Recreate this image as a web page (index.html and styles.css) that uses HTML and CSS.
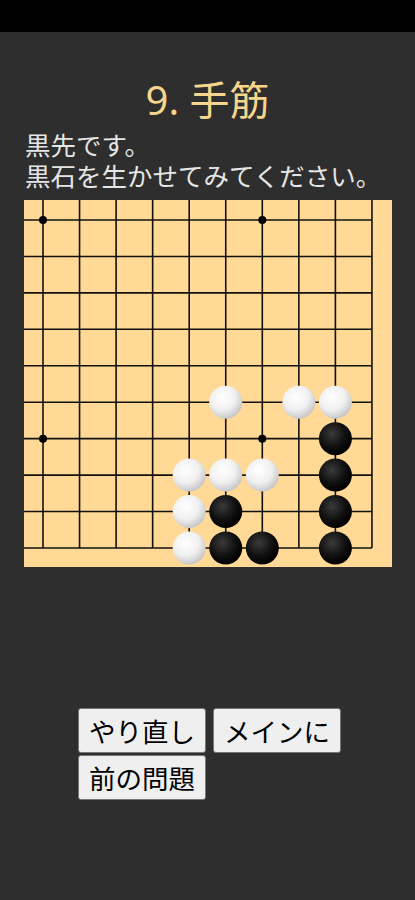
FILE: index.html
```html
<!DOCTYPE html>
<html>
<head>
    <title>手筋</title>
    <meta charset="UTF-8">
    <meta name="viewport" content="width=device-width, initial-scale=1.0">
    <link rel="stylesheet" href="styles.css">
</head>
<body>
    <div class="status-bar"></div>
    <div class="page">
        <h1 class="title">9. 手筋</h1>
        <p class="question">黒先です。<br>黒石を生かせてみてください。</p>

        <div class="board">
            <svg width="368" height="367" viewBox="0 0 368 367">
                <defs>
                    <radialGradient id="white-stone" cx="40%" cy="35%" r="65%">
                        <stop offset="0%" stop-color="#ffffff"/>
                        <stop offset="60%" stop-color="#f0f0f0"/>
                        <stop offset="100%" stop-color="#c8c8c8"/>
                    </radialGradient>
                    <radialGradient id="black-stone" cx="40%" cy="35%" r="65%">
                        <stop offset="0%" stop-color="#3a3a3a"/>
                        <stop offset="60%" stop-color="#111111"/>
                        <stop offset="100%" stop-color="#000000"/>
                    </radialGradient>
                </defs>
                <rect width="368" height="367" fill="#ffd995"/>
                <g id="grid" stroke="#111" stroke-width="1.6"></g>
                <g id="stars" fill="#000"></g>
                <g id="stones"></g>
            </svg>
        </div>

        <div class="buttons">
            <button class="btn">やり直し</button>
            <button class="btn">メインに</button>
            <button class="btn">前の問題</button>
        </div>
    </div>

    <script>
        // bottom-right corner of the board, lines 10 to 19
        var size = 10;
        var x0 = 19, y0 = 20, stepX = 36.55, stepY = 36.44;
        var ns = "http://www.w3.org/2000/svg";

        function px(c) { return x0 + stepX * c; }
        function py(r) { return y0 + stepY * r; }

        function add(parent, tag, attrs) {
            var el = document.createElementNS(ns, tag);
            for (var k in attrs) el.setAttribute(k, attrs[k]);
            document.getElementById(parent).appendChild(el);
        }

        for (var i = 0; i < size; i++) {
            add("grid", "line", { x1: 0, y1: py(i), x2: px(size - 1), y2: py(i) });
            add("grid", "line", { x1: px(i), y1: 0, x2: px(i), y2: py(size - 1) });
        }

        [[0, 0], [6, 0], [0, 6], [6, 6]].forEach(function(p) {
            add("stars", "circle", { cx: px(p[0]), cy: py(p[1]), r: 4 });
        });

        var white = [[5,5],[7,5],[8,5],[4,7],[5,7],[6,7],[4,8],[4,9]];
        var black = [[8,6],[8,7],[8,8],[8,9],[5,8],[5,9],[6,9]];

        white.forEach(function(p) {
            add("stones", "circle", { cx: px(p[0]), cy: py(p[1]), r: 16.5, fill: "url(#white-stone)" });
        });
        black.forEach(function(p) {
            add("stones", "circle", { cx: px(p[0]), cy: py(p[1]), r: 16.5, fill: "url(#black-stone)" });
        });
    </script>
</body>
</html>
```

FILE: styles.css
```css
body {
  margin: 0;
  background-color: #2e2e2e;
  font-family: "Noto Sans", "Noto Sans CJK JP", sans-serif;
}

.status-bar {
  height: 32px;
  background-color: #000;
}

.page {
  padding-top: 40px;
}

.title {
  margin: 0;
  text-align: center;
  font-size: 40px;
  font-weight: normal;
  line-height: 56px;
  color: #f6d58c;
}

.question {
  margin: 2px 0 0 0;
  padding-left: 25px;
  font-size: 25.5px;
  line-height: 31px;
  color: #e6e6e6;
}

.board {
  margin: 8px 0 0 24px;
  width: 368px;
  height: 367px;
}

.board svg {
  display: block;
}

.buttons {
  width: 275px;
  margin: 141px 0 0 78px;
  display: flex;
  flex-wrap: wrap;
  gap: 2px 7px;
}

.btn {
  font-family: "Noto Sans CJK JP", sans-serif;
  font-size: 26.5px;
  line-height: 37px;
  padding: 3px 10px;
  color: #000;
  background-color: #efefef;
  border: 1px solid #767676;
  border-radius: 3px;
}
```
